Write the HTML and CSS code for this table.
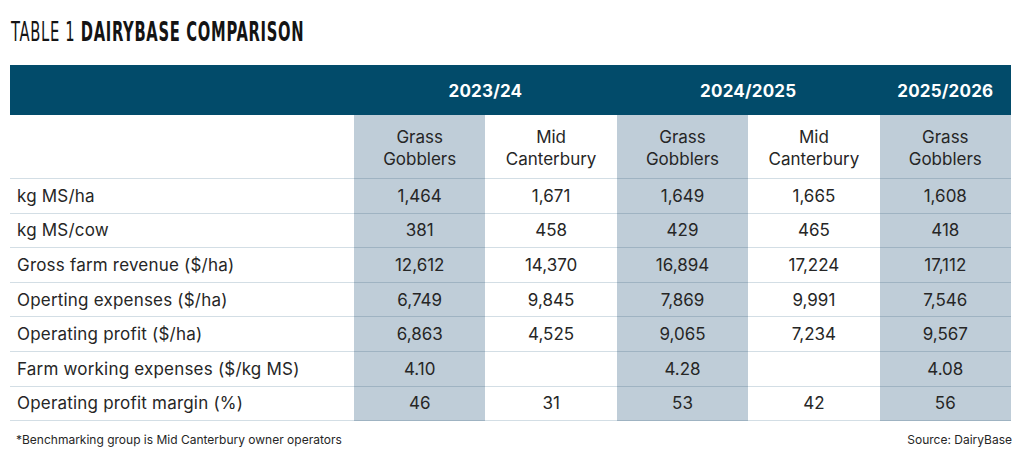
FILE: index.html
```html
<!DOCTYPE html>
<html>
<head>
<meta charset="utf-8">
<link rel="stylesheet" href="styles.css">
</head>
<body>
<div class="page">
  <h1 class="title"><span class="t-light">TABLE 1</span> <span class="t-bold">DAIRYBASE COMPARISON</span></h1>
  <table class="cmp">
    <colgroup>
      <col class="c-label">
      <col class="c-val"><col class="c-val"><col class="c-val"><col class="c-val"><col class="c-val">
    </colgroup>
    <thead>
      <tr class="years">
        <th></th>
        <th colspan="2">2023/24</th>
        <th colspan="2">2024/2025</th>
        <th>2025/2026</th>
      </tr>
      <tr class="groups">
        <th></th>
        <th class="sh">Grass<br>Gobblers</th>
        <th>Mid<br>Canterbury</th>
        <th class="sh">Grass<br>Gobblers</th>
        <th>Mid<br>Canterbury</th>
        <th class="sh">Grass<br>Gobblers</th>
      </tr>
    </thead>
    <tbody>
      <tr><td class="lbl">kg MS/ha</td><td class="sh">1,464</td><td>1,671</td><td class="sh">1,649</td><td>1,665</td><td class="sh">1,608</td></tr>
      <tr><td class="lbl">kg MS/cow</td><td class="sh">381</td><td>458</td><td class="sh">429</td><td>465</td><td class="sh">418</td></tr>
      <tr><td class="lbl">Gross farm revenue ($/ha)</td><td class="sh">12,612</td><td>14,370</td><td class="sh">16,894</td><td>17,224</td><td class="sh">17,112</td></tr>
      <tr><td class="lbl">Operting expenses ($/ha)</td><td class="sh">6,749</td><td>9,845</td><td class="sh">7,869</td><td>9,991</td><td class="sh">7,546</td></tr>
      <tr><td class="lbl">Operating profit ($/ha)</td><td class="sh">6,863</td><td>4,525</td><td class="sh">9,065</td><td>7,234</td><td class="sh">9,567</td></tr>
      <tr><td class="lbl">Farm working expenses ($/kg MS)</td><td class="sh">4.10</td><td></td><td class="sh">4.28</td><td></td><td class="sh">4.08</td></tr>
      <tr><td class="lbl">Operating profit margin (%)</td><td class="sh">46</td><td>31</td><td class="sh">53</td><td>42</td><td class="sh">56</td></tr>
    </tbody>
  </table>
  <div class="foot">
    <span>*Benchmarking group is Mid Canterbury owner operators</span>
    <span>Source: DairyBase</span>
  </div>
</div>
</body>
</html>
```
FILE: styles.css
```css
html, body {
  margin: 0;
  padding: 0;
  background: #ffffff;
}

.page {
  padding: 18px 12px 0 10px;
  font-family: "Inter", "Liberation Sans", sans-serif;
  color: #262626;
}

.title {
  display: inline-block;
  margin: 0 0 0 1px;
  font-family: "DejaVu Sans Condensed", "DejaVu Sans", sans-serif;
  font-size: 26px;
  line-height: 28px;
  font-weight: 400;
  color: #141414;
  height: 47px;
  white-space: nowrap;
  letter-spacing: 1.1px;
  transform: scaleX(0.63);
  transform-origin: left top;
}

.t-bold {
  font-weight: 700;
}

.cmp {
  width: 1001px;
  border-collapse: collapse;
  table-layout: fixed;
  font-size: 17px;
}

.c-label { width: 344px; }
.c-val { width: 131.4px; }

.years th {
  background: #024b6a;
  color: #ffffff;
  font-weight: 700;
  height: 48px;
  padding: 2px 0 0;
  text-align: center;
  font-size: 17px;
  letter-spacing: 0.2px;
}

.groups th {
  font-weight: 400;
  height: 61px;
  padding: 2px 0 0;
  line-height: 22px;
  text-align: center;
  border-bottom: 1px solid #d3dee5;
}

.sh {
  background: #bfcdd8;
}

.groups th.sh,
tbody td.sh {
  border-bottom-color: #9fb3c2;
}

tbody td {
  height: 33.6px;
  padding: 0;
  text-align: center;
  border-bottom: 1px solid #d3dee5;
  line-height: 20px;
}

tbody td.lbl {
  text-align: left;
  padding-left: 7px;
  letter-spacing: 0.2px;
}

.foot {
  display: flex;
  justify-content: space-between;
  padding: 11px 0 0 6px;
  font-size: 12px;
  color: #262626;
}
```
